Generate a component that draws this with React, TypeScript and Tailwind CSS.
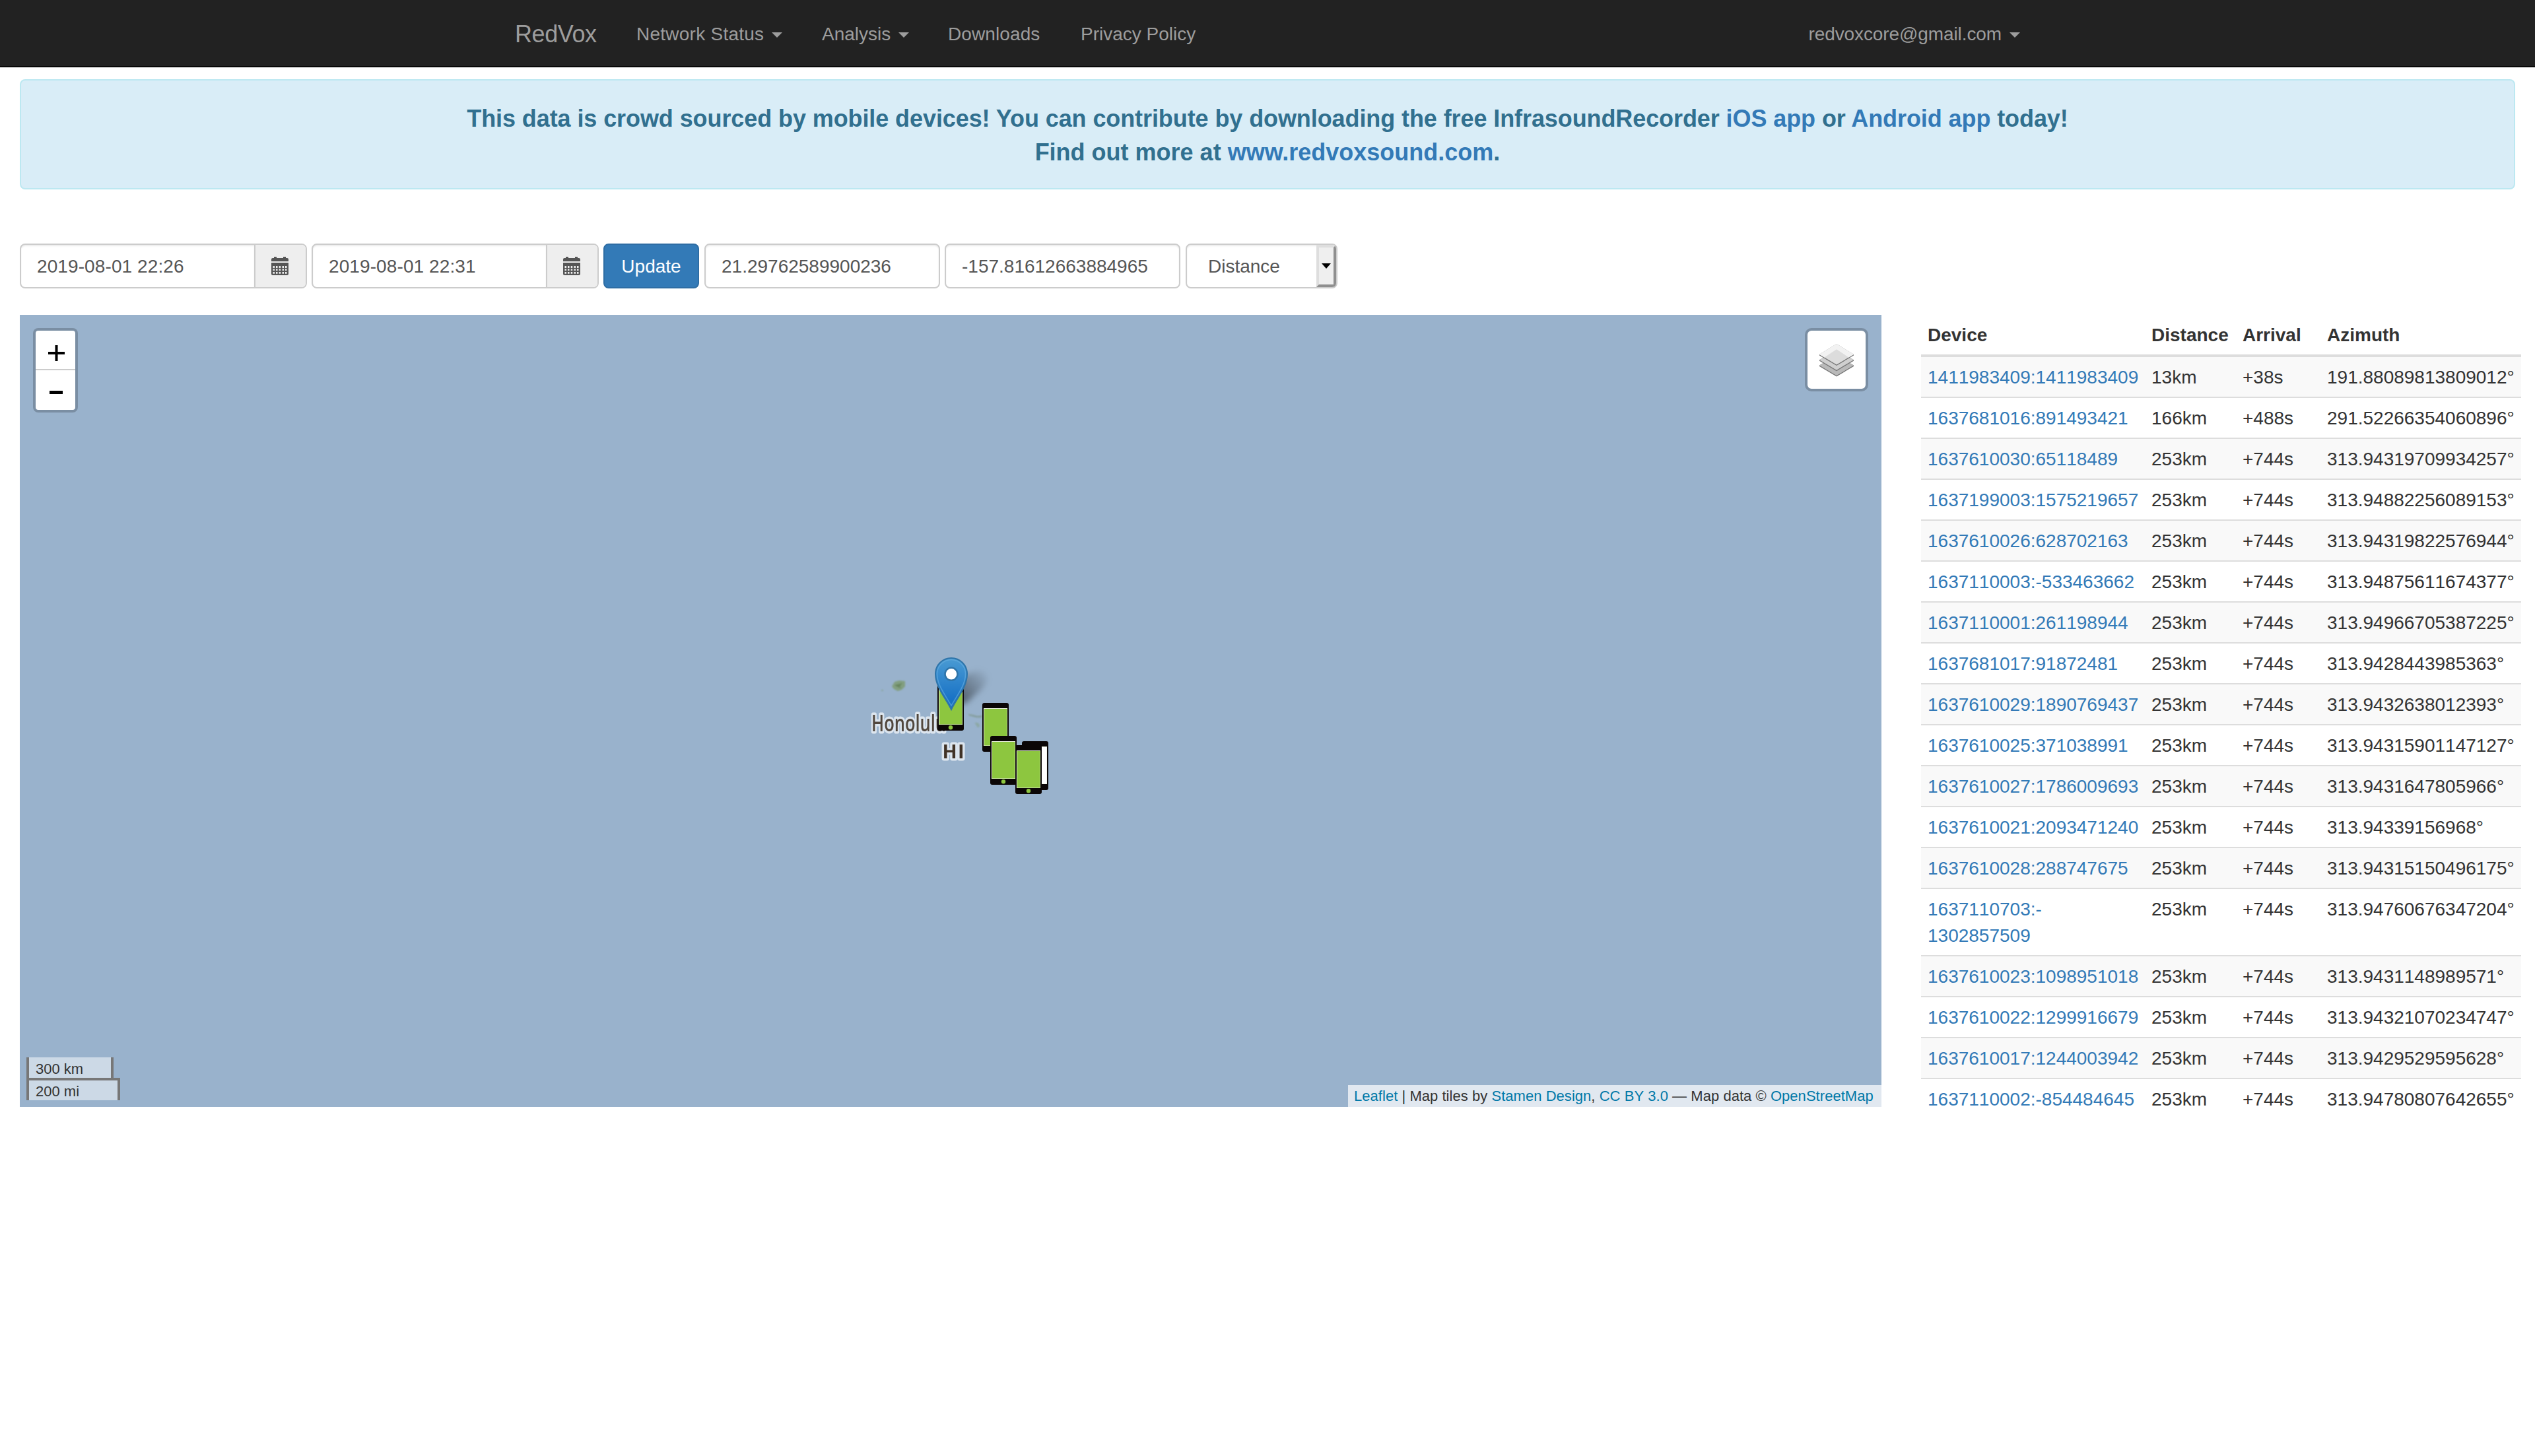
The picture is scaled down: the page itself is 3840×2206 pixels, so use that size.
import React from "react";

const rows: [string, string, string, string][] = [
  ["1411983409:1411983409", "13km", "+38s", "191.88089813809012°"],
  ["1637681016:891493421", "166km", "+488s", "291.52266354060896°"],
  ["1637610030:65118489", "253km", "+744s", "313.94319709934257°"],
  ["1637199003:1575219657", "253km", "+744s", "313.94882256089153°"],
  ["1637610026:628702163", "253km", "+744s", "313.94319822576944°"],
  ["1637110003:-533463662", "253km", "+744s", "313.94875611674377°"],
  ["1637110001:261198944", "253km", "+744s", "313.94966705387225°"],
  ["1637681017:91872481", "253km", "+744s", "313.9428443985363°"],
  ["1637610029:1890769437", "253km", "+744s", "313.9432638012393°"],
  ["1637610025:371038991", "253km", "+744s", "313.94315901147127°"],
  ["1637610027:1786009693", "253km", "+744s", "313.9431647805966°"],
  ["1637610021:2093471240", "253km", "+744s", "313.94339156968°"],
  ["1637610028:288747675", "253km", "+744s", "313.94315150496175°"],
  ["1637110703:- 1302857509", "253km", "+744s", "313.94760676347204°"],
  ["1637610023:1098951018", "253km", "+744s", "313.9431148989571°"],
  ["1637610022:1299916679", "253km", "+744s", "313.94321070234747°"],
  ["1637610017:1244003942", "253km", "+744s", "313.9429529595628°"],
  ["1637110002:-854484645", "253km", "+744s", "313.94780807642655°"],
];

function Caret() {
  return <span className="mt-0.5 ml-3 inline-block border-x-8 border-t-8 border-x-transparent border-t-[#9d9d9d]" />;
}

function Calendar() {
  return (
    <svg className="mr-[2px]" width="26" height="28" viewBox="0 0 26 28" fill="#555">
      <path d="M0 7V4q0-2 2-2h2V0h4v2h10V0h4v2h2q2 0 2 2v3z" />
      <path
        fillRule="evenodd"
        d="M0 9h26v17q0 2-2 2H2q-2 0-2-2zM2.500 14v3H5v-3zM7 14v3h2.500v-3zM11.700 14v3h2.500v-3zM16.500 14v3H19v-3zM21 14v3h2.500v-3zM2.500 18.500V21H5v-2.500zM7 18.500V21h2.500v-2.500zM11.700 18.500V21h2.500v-2.500zM16.500 18.500V21H19v-2.500zM21 18.500V21h2.500v-2.500zM2.500 23v2.700H5V23zM7 23v2.700h2.500V23zM11.700 23v2.700h2.500V23zM16.500 23v2.700H19V23zM21 23v2.700h2.500V23z"
      />
    </svg>
  );
}

function DateInput({ value }: { value: string }) {
  return (
    <div className="flex h-[68px] w-[435px] rounded-lg border-2 border-[#ccc] bg-white text-[#555]">
      <div className="flex w-[353px] items-center rounded-l-md pt-[2px] pl-6 tracking-[0.1px] shadow-[inset_0_2px_2px_rgba(0,0,0,0.075)]">{value}</div>
      <div className="flex flex-1 items-center justify-center rounded-r-md border-l-2 border-[#ccc] bg-[#eee]">
        <Calendar />
      </div>
    </div>
  );
}

function TextInput({ value }: { value: string }) {
  return (
    <div className="flex h-[68px] w-[357px] items-center rounded-lg border-2 border-[#ccc] bg-white pt-[2px] pl-6 text-[#555] shadow-[inset_0_2px_2px_rgba(0,0,0,0.075)]">
      {value}
    </div>
  );
}

function Phone({ x, y, screen = "#8dc63f" }: { x: number; y: number; screen?: string }) {
  return (
    <g transform={`translate(${x} ${y})`}>
      <rect width="40" height="74" rx="3" fill="#0b0606" />
      <rect x="2" y="8" width="36" height="57" fill="#e9f0dc" />
      <rect x="3" y="9" width="34.500" height="55.500" fill={screen} />
      <circle cx="20" cy="69.300" r="3.200" fill={screen} />
    </g>
  );
}

function MapMarkers() {
  return (
    <svg className="absolute top-[503px] left-[1270px]" width="320" height="240" viewBox="0 0 320 240">
      <defs>
        <linearGradient id="pin" x1="0" y1="0" x2="0" y2="1">
          <stop offset="0" stopColor="#4a9bd3" />
          <stop offset="0.85" stopColor="#1670c5" />
        </linearGradient>
        <linearGradient id="shadow" x1="0" y1="1" x2="1" y2="0">
          <stop offset="0" stopColor="#000" stopOpacity="0.6" />
          <stop offset="1" stopColor="#000" stopOpacity="0" />
        </linearGradient>
        <filter id="soft" x="-50%" y="-50%" width="200%" height="200%">
          <feGaussianBlur stdDeviation="0.9" />
        </filter>
        <filter id="label" x="-20%" y="-30%" width="140%" height="160%">
          <feGaussianBlur stdDeviation="0.5" />
        </filter>
        <filter id="shade" x="-60%" y="-60%" width="220%" height="220%">
          <feGaussianBlur stdDeviation="5" />
        </filter>
      </defs>
      <g filter="url(#soft)">
        <path d="M51 60l4-7 7-2 9 1v8l-5 5-6 2-6-3z" fill="#829f80" />
        <path d="M55 58l12-3-4 5 2 3-5-2z" fill="#68865f" />
        <path d="M35 66h3" stroke="#8aa5a0" strokeWidth="2" />
        <path d="M167 102l6 1 8 2 6-1v3l-8 0-11-3z" fill="#8299a0" stroke="#8ca6a6" />
        <path d="M177 115l5 1 2 4-3 2z" fill="#8ca8a6" stroke="#8ca8a6" />
      </g>
      <g
        fontFamily="'Open Sans', 'Noto Sans', sans-serif"
        stroke="#dce5ee"
        strokeWidth="7"
        strokeLinejoin="round"
        paintOrder="stroke"
        filter="url(#label)"
      >
        <text x="20" y="128" fontSize="34" fontWeight="600" fill="#51463e" textLength="113" lengthAdjust="spacingAndGlyphs">Honolulu</text>
        <text x="127.500" y="169" fontSize="29" fontWeight="700" fill="#3f3125" textLength="33" lengthAdjust="spacing">HI</text>
      </g>
      <path d="M141 92l12-40q10-14 34-16 16 8 2 26l-24 22z" fill="url(#shadow)" filter="url(#shade)" />
      <Phone x={120} y={53} />
      <Phone x={188} y={85} />
      <Phone x={248} y={143} screen="#ffffff" />
      <Phone x={200} y={135} />
      <Phone x={238} y={149} />
      <path
        d="M141 95C133 78 117 61 117 41a24 24 0 0 1 48 0C165 61 149 78 141 95z"
        fill="url(#pin)"
        stroke="#2e74a9"
        strokeWidth="2"
      />
      <path
        d="M141 89C132 73 119.500 58 119.500 41a21.500 21.500 0 0 1 43 0C162.500 58 150 73 141 89z"
        fill="none"
        stroke="#6db3e2"
        strokeOpacity=".55"
        strokeWidth="1.600"
      />
      <circle cx="141" cy="41.300" r="9.500" fill="#fff" stroke="#2e74a9" strokeWidth="2.500" />
    </svg>
  );
}

function LayersIcon() {
  return (
    <svg width="52" height="52" viewBox="0 0 52 52">
      <path d="M0 34.500v1.500l26 15.500L52 36v-1.500L26 19z" fill="#747474" />
      <path d="M0 34.500L26 50l26-15.500L26 19z" fill="#b9b9b9" />
      <path d="M0 26.200v1.500l26 15.500 26-15.500v-1.500L26 10.700z" fill="#747474" />
      <path d="M0 26.200l26 15.500 26-15.500-26-15.500z" fill="#cfcfcf" />
      <path d="M0 18v1.500L26 35l26-15.500V18L26 2z" fill="#747474" />
      <path d="M0 18L26 2l26 16-26 15.500z" fill="#dcdcdc" />
      <path d="M0 18L26 2l26 16-7.500 4.500L26 10.300 7.500 22.500z" fill="#f2f2f2" />
    </svg>
  );
}

export default function App() {
  return (
    <div className="min-h-[2206px] w-[3840px] bg-white font-['Liberation_Sans',Arial,sans-serif] text-[28px] leading-10 text-[#333]">
      <nav className="h-[102px] border-b-2 border-[#080808] bg-[#222] text-[#9d9d9d]">
        <div className="mx-auto flex h-[100px] w-[2280px] items-center pt-1">
          <span className="w-[154px] text-[36px] tracking-[-0.4px]">RedVox</span>
          <div className="flex items-center pl-[30px]">
            <a className="flex w-[281px] items-center tracking-[0.25px]">Network Status<Caret /></a>
            <a className="flex w-[191px] items-center">Analysis<Caret /></a>
            <a className="w-[201px] tracking-[0.1px]">Downloads</a>
            <a>Privacy Policy</a>
          </div>
          <a className="ml-auto flex items-center tracking-[-0.1px]">redvoxcore@gmail.com<Caret /></a>
        </div>
      </nav>

      <div className="mx-[30px] mt-[18px] flex h-[167px] flex-col items-center justify-center rounded-lg border-2 border-[#bce8f1] bg-[#d9edf7] pt-[3px] text-[36px] leading-[51px] font-bold text-[#31708f]">
        <p className="tracking-[-0.09px]">
          This data is crowd sourced by mobile devices! You can contribute by downloading the free InfrasoundRecorder{" "}
          <a className="text-[#337ab7]">iOS app</a> or <a className="text-[#337ab7]">Android app</a> today!
        </p>
        <p>
          Find out more at <a className="text-[#337ab7]">www.redvoxsound.com</a>.
        </p>
      </div>

      <div className="mt-[82px] ml-[30px] flex gap-[7px] [font-kerning:none]">
        <DateInput value="2019-08-01 22:26" />
        <DateInput value="2019-08-01 22:31" />
        <button className="mr-px h-[68px] w-[145px] rounded-lg border-2 border-[#2e6da4] bg-[#337ab7] pt-[2px] text-white">Update</button>
        <TextInput value="21.29762589900236" />
        <TextInput value="-157.81612663884965" />
        <div className="ml-px flex h-[68px] w-[230px] items-center overflow-hidden rounded-lg border-2 border-[#ccc] bg-white text-[#555] shadow-[inset_0_2px_2px_rgba(0,0,0,0.075)]">
          <span className="flex-1 pt-[2px] pl-[32px]">Distance</span>
          <span className="flex h-full w-[30px] items-center justify-center border-4 border-t-[#dedede] border-r-[#8f8f8f] border-b-[#8f8f8f] border-l-[#dedede] bg-[#efefef]">
            <span className="border-x-[7px] border-t-8 border-x-transparent border-t-black" />
          </span>
        </div>
      </div>

      <main className="mt-10 ml-[30px] flex h-[1200px]">
        <section className="relative w-[2820px] overflow-hidden bg-[#99b2cc]">
          <MapMarkers />
          <div className="absolute top-5 left-5 h-32 w-[68px] rounded-lg border-4 border-black/20 bg-white bg-clip-padding text-black">
            <div className="flex h-[60px] items-center justify-center border-b-2 border-[#ccc] pt-[10px] pl-[2px]">
              <svg width="25" height="24" viewBox="0 0 25 24"><path d="M10.500 0h4v10H25v4H14.500v10h-4V14H0v-4h10.500z" /></svg>
            </div>
            <div className="flex h-[60px] items-center justify-center pt-[6px] pl-[2px]">
              <svg width="20" height="5" viewBox="0 0 20 5"><path d="M0 0h20v5H0z" /></svg>
            </div>
          </div>
          <div className="absolute top-5 right-5 flex h-24 w-24 items-center justify-center rounded-[10px] border-4 border-black/20 bg-white bg-clip-padding">
            <LayersIcon />
          </div>
          <div className="absolute bottom-[10px] left-[10px] text-[22px] leading-[30px]">
            <div className="h-[31px] w-[132px] border-x-4 border-[#777] bg-white/50 pl-[10px] leading-[35px]">300 km</div>
            <div className="h-[34px] w-[142px] border-4 border-b-0 border-[#777] bg-white/50 pl-[10px] leading-[33px]">200 mi</div>
          </div>
          <div className="absolute right-0 bottom-0 h-[33px] w-[808px] bg-white/70 px-[9px] text-[22px] leading-[33px] tracking-[0.04px] whitespace-nowrap [font-kerning:none]">
            <a className="text-[#0078a8]">Leaflet</a> | Map tiles by <a className="text-[#0078a8]">Stamen Design</a>, <a className="text-[#0078a8]">CC BY 3.0</a> — Map data ©{" "}
            <a className="text-[#0078a8]">OpenStreetMap</a>
          </div>
        </section>

        <section className="ml-[60px] w-[909px] overflow-hidden">
          <table className="w-[909px] table-fixed border-separate border-spacing-0 text-left [font-kerning:none]">
            <colgroup>
              <col className="w-[339px]" />
              <col className="w-[138px]" />
              <col className="w-[128px]" />
              <col className="w-[304px]" />
            </colgroup>
            <thead>
              <tr>
                {["Device", "Distance", "Arrival", "Azimuth"].map((h) => (
                  <th key={h} className="border-b-4 border-[#ddd] pt-[11px] pb-[9px] pl-[10px] font-bold">{h}</th>
                ))}
              </tr>
            </thead>
            <tbody>
              {rows.map((r) => (
                <tr key={r[0]} className="group odd:bg-[#f9f9f9]">
                  {r.map((c, j) => (
                    <td
                      key={j}
                      className="border-t-2 border-[#ddd] pt-[11px] pb-[9px] pl-[10px] align-top group-first:border-t-0"
                    >
                      {j === 0 ? <a className="text-[#337ab7]">{c}</a> : c}
                    </td>
                  ))}
                </tr>
              ))}
            </tbody>
          </table>
        </section>
      </main>
    </div>
  );
}
